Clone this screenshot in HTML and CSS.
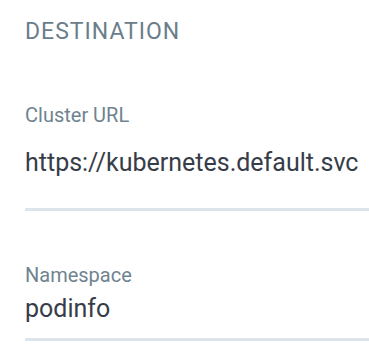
FILE: index.html
```html
<!DOCTYPE html>
<html lang="en">
<head>
    <meta charset="UTF-8">
    <meta name="viewport" content="width=device-width, initial-scale=1.0">
    <title>Destination</title>
    <link rel="stylesheet" href="styles.css">
</head>
<body>
    <div class="painel">
        <h2 class="titulo">DESTINATION</h2>

        <div class="campo campo-url">
            <label class="rotulo">Cluster URL</label>
            <div class="valor">https://kubernetes.default.svc</div>
        </div>

        <div class="campo campo-ns">
            <label class="rotulo">Namespace</label>
            <div class="valor">podinfo</div>
        </div>
    </div>
</body>
</html>
```

FILE: styles.css
```css
body {
    margin: 0;
    background: #ffffff;
    font-family: 'Roboto', 'Liberation Sans', sans-serif;
}

.painel {
    padding: 18px 0 0 25px;
}

.titulo {
    margin: 0 0 57px 0;
    font-size: 23px;
    line-height: 28px;
    font-weight: 400;
    color: #6a7d8b;
    letter-spacing: 1px;
}

.campo {
    border-bottom: 3px solid #dde4ea;
}

.rotulo {
    display: block;
    font-size: 20px;
    line-height: 24px;
    color: #6f8390;
}

.valor {
    font-size: 25px;
    line-height: 30px;
    color: #363d48;
}

.campo-url .valor {
    margin-top: 21px;
    padding-bottom: 30px;
}

.campo-ns {
    margin-top: 52px;
}

.campo-ns .valor {
    margin-top: 7px;
    padding-bottom: 14px;
}
```
